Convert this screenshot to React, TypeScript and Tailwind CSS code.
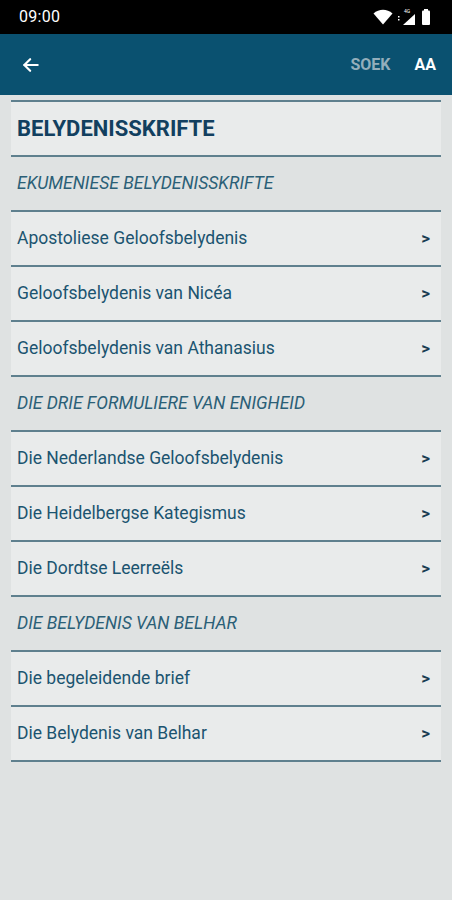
import React from 'react'

type Row = { kind: 'section' | 'item'; label: string }

const rows: Row[] = [
  { kind: 'section', label: 'EKUMENIESE BELYDENISSKRIFTE' },
  { kind: 'item', label: 'Apostoliese Geloofsbelydenis' },
  { kind: 'item', label: 'Geloofsbelydenis van Nicéa' },
  { kind: 'item', label: 'Geloofsbelydenis van Athanasius' },
  { kind: 'section', label: 'DIE DRIE FORMULIERE VAN ENIGHEID' },
  { kind: 'item', label: 'Die Nederlandse Geloofsbelydenis' },
  { kind: 'item', label: 'Die Heidelbergse Kategismus' },
  { kind: 'item', label: 'Die Dordtse Leerreëls' },
  { kind: 'section', label: 'DIE BELYDENIS VAN BELHAR' },
  { kind: 'item', label: 'Die begeleidende brief' },
  { kind: 'item', label: 'Die Belydenis van Belhar' },
]

function StatusBar() {
  return (
    <div className="h-[34px] bg-black flex items-center justify-between pl-[19px] pr-[21px] text-white">
      <span className="text-[16px] tracking-[0.3px]">09:00</span>
      <div className="flex items-center gap-[4px]">
        {/* wifi */}
        <svg width="20" height="16" viewBox="0 0 20 16">
          <path d="M0.5 4.5 C6 -0.5 14 -0.5 19.5 4.5 L10 15.5 Z" fill="#fff" />
        </svg>
        {/* signal with 4G */}
        <svg width="20" height="18" viewBox="0 0 20 18">
          <text x="7" y="5" fontSize="5" fill="#fff" fontFamily="Roboto, sans-serif">4G</text>
          <rect x="1" y="8" width="1.5" height="1.5" fill="#fff" />
          <rect x="1" y="11" width="1.5" height="1.5" fill="#fff" />
          <path d="M18 6 L18 17 L6 17 Z" fill="#fff" />
        </svg>
        {/* battery */}
        <svg width="10" height="16" viewBox="0 0 10 16">
          <rect x="3" y="0" width="4" height="2" fill="#fff" />
          <rect x="1" y="1.5" width="8" height="14.5" rx="1" fill="#fff" />
        </svg>
      </div>
    </div>
  )
}

function AppBar() {
  return (
    <div className="h-[61px] bg-[#0a5170] flex items-center pl-[21px] pr-[16px]">
      <svg width="20" height="20" viewBox="0 0 24 24" fill="none" stroke="#fff" strokeWidth="2.6" strokeLinecap="round" strokeLinejoin="round">
        <path d="M20 12H4" />
        <path d="M11 5l-7 7 7 7" />
      </svg>
      <div className="ml-auto flex items-center gap-[24px] font-bold text-[16px]">
        <span className="text-[#93aebb]">SOEK</span>
        <span className="text-white">AA</span>
      </div>
    </div>
  )
}

export default function App() {
  return (
    <div className="w-[452px] h-[900px] bg-[#dfe2e2] overflow-hidden" style={{ fontFamily: 'Roboto, "Liberation Sans", sans-serif' }}>
      <StatusBar />
      <AppBar />
      <div className="mx-[11px] mt-[5px] border-t-2 border-[#5f808e]">
        <div className="h-[55px] bg-[#e9ebeb] border-b-2 border-[#5f808e] flex items-center px-[6px]">
          <span className="text-[22px] font-bold text-[#123f5f]">BELYDENISSKRIFTE</span>
        </div>
        {rows.map((r, i) =>
          r.kind === 'section' ? (
            <div key={i} className="h-[55px] border-b-2 border-[#5f808e] flex items-center px-[6px]">
              <span className="text-[17.5px] italic text-[#2b5f77]">{r.label}</span>
            </div>
          ) : (
            <div key={i} className="h-[55px] bg-[#e9ebeb] border-b-2 border-[#5f808e] flex items-center pl-[6px] pr-[11px]">
              <span className="text-[17.5px] text-[#1b5470]">{r.label}</span>
              <span className="ml-auto text-[17px] font-bold text-[#183c52]">&gt;</span>
            </div>
          )
        )}
      </div>
    </div>
  )
}
